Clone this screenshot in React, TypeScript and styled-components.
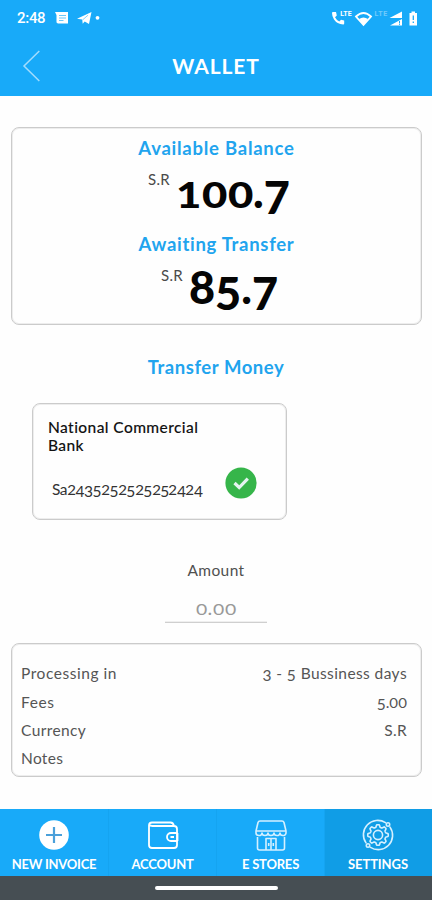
import React from "react";
import styled, { createGlobalStyle } from "styled-components";

const GlobalStyle = createGlobalStyle`
  * { box-sizing: border-box; }
  body { margin: 0; background: #fff; font-family: Lato, "Open Sans", sans-serif; }
`;

const Screen = styled.main`
  width: 432px;
  height: 900px;
  overflow: hidden;
  display: flex;
  flex-direction: column;
  background: #fefefe;
`;

const TopBar = styled.div`
  height: 96px;
  flex: none;
  background: #18aaf9;
  color: #fff;
`;

const StatusBar = styled.div`
  height: 36px;
  padding: 0 14px 0 17px;
  display: flex;
  align-items: center;
  justify-content: space-between;
`;

const StatusGroup = styled.div`
  display: flex;
  align-items: center;
`;

const Clock = styled.span`
  width: 37px;
  font: 500 15px/20px Roboto, sans-serif;
  letter-spacing: -0.3px;
`;

const Header = styled.header`
  height: 60px;
  padding: 0 22px;
  display: grid;
  grid-template-columns: 40px 1fr 40px;
  align-items: center;
`;

const Label = styled.span<{ $spacing?: number }>`
  display: block;
  white-space: nowrap;
  letter-spacing: ${(p) => p.$spacing ?? 0}px;
`;

const Title = styled.h1`
  margin: 0;
  font-size: 21px;
  line-height: 24px;
  font-weight: 700;
  text-align: center;
`;

const Panel = styled.section<{ $gap: number; $height: number }>`
  margin: ${(p) => p.$gap}px 10px 0 11px;
  height: ${(p) => p.$height}px;
  flex: none;
  border: 1px solid #cbcbcb;
  box-shadow: inset 0 0 0 1px #ededed;
  border-radius: 8px;
`;

const BalancePanel = styled(Panel)`
  padding-top: 8px;
`;

const Heading = styled.h2`
  margin: 0;
  color: #21a4ee;
  font-size: 18.5px;
  line-height: 24px;
  font-weight: 700;
  text-align: center;
`;

const AmountRow = styled.div<{ $inset: number }>`
  height: 72px;
  padding: 7px 0 0 ${(p) => p.$inset}px;
  display: flex;
  align-items: flex-start;
`;

const Unit = styled.span<{ $width: number }>`
  width: ${(p) => p.$width}px;
  font-size: 15px;
  line-height: 24px;
  letter-spacing: 0.3px;
  color: #4a4a4a;
`;

const BigNumber = styled.strong`
  font-size: 45px;
  line-height: 48px;
  font-weight: 900;
  color: #050505;
  white-space: nowrap;
`;

const Digit = styled.span<{ $kind: "small" | "low" | "tall" }>`
  display: inline-block;
  line-height: 0;
  transform-origin: 50% 50%;
  ${(p) =>
    p.$kind === "small"
      ? "font-size: 0.81em; transform: scaleX(1.2); margin: 0 0.063em;"
      : ""}
  ${(p) => (p.$kind === "low" ? "vertical-align: -0.14em;" : "")}
`;

function Figures({ value }: { value: string }) {
  return (
    <>
      {value.split("").map((c, i) =>
        /\d/.test(c) ? (
          <Digit key={i} $kind={"012".includes(c) ? "small" : "68".includes(c) ? "tall" : "low"}>
            {c}
          </Digit>
        ) : (
          c
        )
      )}
    </>
  );
}

const TransferHeading = styled(Heading)`
  margin-top: 30px;
`;

const BankCard = styled.section`
  margin: 24px 0 0 32px;
  width: 255px;
  height: 117px;
  flex: none;
  padding: 14px 29px 0 15px;
  border: 1px solid #cbcbcb;
  box-shadow: inset 0 0 0 1px #ededed;
  border-radius: 8px;
`;

const BankName = styled.div`
  font-size: 15.5px;
  line-height: 18px;
  font-weight: 500;
  color: #111;
  -webkit-text-stroke: 0.1px #111;
`;

const BankRow = styled.div`
  margin-top: 13px;
  padding-left: 4px;
  display: flex;
  align-items: center;
  justify-content: space-between;
`;

const Iban = styled.div`
  padding-top: 12px;
  font-size: 15.5px;
  line-height: 20px;
  letter-spacing: -0.47px;
  color: #333;
  white-space: nowrap;
`;

const AmountField = styled.div`
  margin: 40px auto 0;
  width: 102px;
  height: 63px;
  flex: none;
  border-bottom: 1px solid #cfcfcf;
  box-shadow: 0 -1px 0 #efefef inset;
  text-align: center;
  font-size: 15.5px;
  line-height: 20px;
  color: #505050;
`;

const Placeholder = styled.div`
  margin-top: 17px;
  font-size: 20px;
  line-height: 20px;
  letter-spacing: 0.5px;
  color: #999;
`;

const DetailPanel = styled(Panel)`
  padding: 15px 14px 0 9px;
`;

const DetailRow = styled.div`
  height: 28.4px;
  display: flex;
  justify-content: space-between;
  align-items: center;
  font-size: 15.5px;
  color: #555;
`;

const Nav = styled.nav`
  margin-top: auto;
  height: 67px;
  flex: none;
  display: grid;
  grid-template-columns: 109px 108px 108px 107px;
`;

const Tab = styled.div<{ $active?: boolean }>`
  padding-top: 9px;
  display: flex;
  flex-direction: column;
  align-items: center;
  gap: 3px;
  color: #fff;
  font-size: 13px;
  line-height: 18px;
  font-weight: 700;
  background: ${(p) => (p.$active ? "#109de6" : "#18aaf9")};
  border-right: 1px solid ${(p) => (p.$active ? "#109de6" : "#15a4f1")};
`;

const GestureBar = styled.div`
  height: 24px;
  flex: none;
  padding-top: 10px;
  background: #464e53;
`;

const Handle = styled.div`
  width: 123px;
  height: 4px;
  margin-left: 155px;
  border-radius: 2px;
  background: #fff;
`;

const LeftStatus = () => (
  <svg width="50" height="16" viewBox="0 0 50 16" fill="#fff">
    <path d="M1 2h13v11.5H4.2c-1 0-1.7-.7-1.7-1.7V5z" />
    <path d="M5 5.500h7M5 8h7M5 10.500h4.500" stroke="#6cc8fa" strokeWidth="1" />
    <path d="M23 8.800 37.500 2 35 14l-4.300-2.500-2 2.300-.5-4.200z" />
    <path d="m28.500 10 5.500-4.800" stroke="#6cc8fa" strokeWidth=".8" />
    <circle cx="43.500" cy="7.800" r="1.900" />
  </svg>
);

const SmallLte = styled.span<{ $dim?: boolean }>`
  font: 700 7px/8px Roboto, sans-serif;
  opacity: ${(p) => (p.$dim ? 0.38 : 1)};
  align-self: flex-start;
  letter-spacing: ${(p) => (p.$dim ? 0.7 : 0)}px;
`;

const RightStatus = styled(StatusGroup)`
  height: 17px;
`;

const PhoneIcon = styled.svg`
  margin-right: -5px;
`;

const gearPath = (() => {
  const points: string[] = [];
  for (let i = 0; i < 96; i++) {
    const a = (i / 96) * Math.PI * 2;
    const r = 9.1 + 1.2 * Math.tanh(2.4 * Math.cos(a * 8));
    points.push(`${(16 + r * Math.sin(a)).toFixed(2)} ${(16 - r * Math.cos(a)).toFixed(2)}`);
  }
  return `M${points.join("L")}Z`;
})();

const icons = {
  add: (
    <svg width="32" height="34" viewBox="0 0 32 34">
      <circle cx="16" cy="17" r="14.8" fill="#fff" />
      <path d="M16 9v16M8 17h16" stroke="#4aa0da" strokeWidth="2.2" />
    </svg>
  ),
  wallet: (
    <svg width="32" height="34" viewBox="0 0 32 34" fill="none" stroke="#fff" strokeWidth="1.8" strokeLinejoin="round">
      <path d="M5 8h22q3 0 3 3v16q0 3-3 3H5q-3 0-3-3V7.500q0-3 3-3h18.500q2.800 0 3.500 3.500M2.300 6.800Q3 8 5.500 8" />
      <path d="M30.500 15H24a4 4 0 0 0 0 8h6.500M30.500 15v8M23.500 19H27" />
    </svg>
  ),
  store: (
    <svg width="32" height="34" viewBox="0 0 32 34" fill="none" stroke="#d5f0ff" strokeWidth="1.6" strokeLinejoin="round">
      <path d="M5 3h22q1.500 0 2 1.500L31 13H1l2-8.500Q3.500 3 5 3ZM1 13v2a3 2.500 0 0 0 6 0a3 2.500 0 0 0 6 0a3 2.500 0 0 0 6 0a3 2.500 0 0 0 6 0a3 2.500 0 0 0 6 0V13" />
      <path d="M2.500 19v11q0 2 2 2h23q2 0 2-2V19M11 32V20.500h10V32M16 20.500V32M13.700 25v3M18.300 25v3" />
    </svg>
  ),
  settings: (
    <svg width="32" height="34" viewBox="0 -1 32 34" fill="none" stroke="#d5f0ff" strokeWidth="1.6" strokeLinecap="round">
      <path d={gearPath} />
      <circle cx="16" cy="16" r="4.600" />
      <path d="M23.500 3.700A14.300 14.300 0 0 0 4 23.900M8.500 28.300A14.300 14.300 0 0 0 28 8.100" />
      <circle cx="26" cy="5.500" r="1.700" />
      <circle cx="6" cy="26.500" r="1.700" />
    </svg>
  ),
};

export default function App() {
  return (
    <>
      <GlobalStyle />
      <Screen>
        <TopBar>
          <StatusBar>
            <StatusGroup>
              <Clock>2:48</Clock>
              <LeftStatus />
            </StatusGroup>
            <RightStatus>
              <PhoneIcon width="14" height="17" viewBox="0 0 14 17" fill="#fff">
                <path d="M2 2h3l.8 3.500-1.800 1.700q1.600 3 4.300 4.300l1.700-1.700 3.200.8v3q0 1-1 1Q6 14 3 9.500 1 6.500 1 3q0-1 1-1z" />
              </PhoneIcon>
              <SmallLte>LTE</SmallLte>
              <svg width="23" height="17" viewBox="0 0 23 17" fill="none">
                <path d="M4 6.500Q11.500-.5 19 6.500L11.500 15z" stroke="#fff" strokeWidth="1.800" />
                <path d="M7 9q4.500-3 9 0l-4.500 6z" fill="#fff" />
              </svg>
              <SmallLte $dim>LTE</SmallLte>
              <svg width="30" height="17" viewBox="0 0 30 17" fill="#fff">
                <path d="M1.500 8 14 1.500V8zM2 15.500 14 9v6.500z" />
                <path d="M11.500 11v2.500M11.500 14.200v.8" stroke="#18aaf9" strokeWidth="1" />
                <path d="M21.500 3h2V1.500h3.500V3h2v12.500h-7.500z" />
                <path d="M25.300 5.500v4.500M25.300 11.500V13" stroke="#18aaf9" strokeWidth="1.300" />
              </svg>
            </RightStatus>
          </StatusBar>
          <Header>
            <svg width="20" height="34" viewBox="0 0 20 34" fill="none" stroke="#a3dcfd" strokeWidth="1.500">
              <path d="M17.300 2 2 17l15.300 15" />
            </svg>
            <Title>
              <Label $spacing={0.9}>WALLET</Label>
            </Title>
          </Header>
        </TopBar>

        <BalancePanel $gap={31} $height={198}>
          <Heading>
            <Label $spacing={0.75}>Available Balance</Label>
          </Heading>
          <AmountRow $inset={136}>
            <Unit $width={28}>S.R</Unit>
            <BigNumber><Figures value="100.7" /></BigNumber>
          </AmountRow>
          <Heading>
            <Label $spacing={0.7}>Awaiting Transfer</Label>
          </Heading>
          <AmountRow $inset={149}>
            <Unit $width={28}>S.R</Unit>
            <BigNumber><Figures value="85.7" /></BigNumber>
          </AmountRow>
        </BalancePanel>

        <TransferHeading>
          <Label $spacing={0.55}>Transfer Money</Label>
        </TransferHeading>

        <BankCard>
          <BankName>
            <Label $spacing={0.42}>National Commercial</Label>
            <Label $spacing={0.4}>Bank</Label>
          </BankName>
          <BankRow>
            <Iban><Figures value="Sa2435252525252424" /></Iban>
            <svg width="32" height="32" viewBox="0 0 32 32">
              <circle cx="16" cy="16" r="15.600" fill="#36b54a" />
              <path d="m9.500 16 4.700 4.500 8.600-8.800" fill="none" stroke="#e4f4f0" strokeWidth="3.200" />
            </svg>
          </BankRow>
        </BankCard>

        <AmountField>
          <Label $spacing={0.4}>Amount</Label>
          <Placeholder><Figures value="0.00" /></Placeholder>
        </AmountField>

        <DetailPanel $gap={20} $height={134}>
          <DetailRow>
            <Label $spacing={0.55}>Processing in</Label>
            <Label $spacing={0.4}><Figures value="3 - 5 Bussiness days" /></Label>
          </DetailRow>
          <DetailRow>
            <Label $spacing={0.6}>Fees</Label>
            <Label><Figures value="5.00" /></Label>
          </DetailRow>
          <DetailRow>
            <Label $spacing={0.4}>Currency</Label>
            <Label $spacing={0.3}>S.R</Label>
          </DetailRow>
          <DetailRow>
            <Label $spacing={0.3}>Notes</Label>
          </DetailRow>
        </DetailPanel>

        <Nav>
          <Tab>{icons.add}<Label $spacing={-0.25}>NEW INVOICE</Label></Tab>
          <Tab>{icons.wallet}<Label $spacing={-0.2}>ACCOUNT</Label></Tab>
          <Tab>{icons.store}<Label $spacing={-0.2}>E STORES</Label></Tab>
          <Tab $active>{icons.settings}<Label $spacing={-0.1}>SETTINGS</Label></Tab>
        </Nav>
        <GestureBar><Handle /></GestureBar>
      </Screen>
    </>
  );
}
